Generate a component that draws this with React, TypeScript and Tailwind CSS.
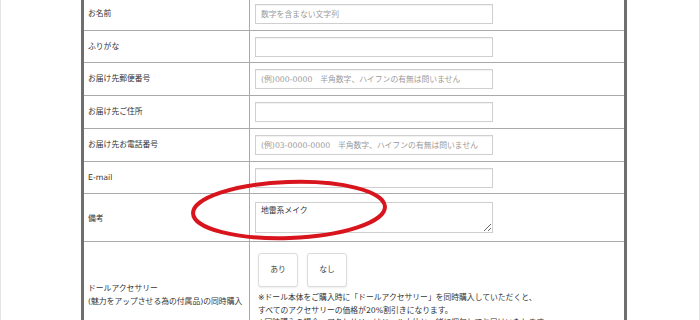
import React from "react";

const ROWS = [
  { label: "お名前", placeholder: "数字を含まない文字列", h: "h-[33px]" },
  { label: "ふりがな", placeholder: "", h: "h-[32px]" },
  { label: "お届け先郵便番号", placeholder: "(例)000-0000　半角数字、ハイフンの有無は問いません", h: "h-[33px]" },
  { label: "お届け先ご住所", placeholder: "", h: "h-[33px]" },
  { label: "お届け先お電話番号", placeholder: "(例)03-0000-0000　半角数字、ハイフンの有無は問いません", h: "h-[33px]" },
  { label: "E-mail", placeholder: "", h: "h-[32px]" },
];

const FONT = { fontFamily: '"DejaVu Sans", "Noto Sans CJK JP", sans-serif' };

export default function App() {
  return (
    <div
      className="relative h-[320px] w-[700px] overflow-hidden border-x border-[#e4e4e4] bg-white text-[7.8px] text-[#333]"
      style={FONT}
    >
      <div className="ml-[80px] mt-[-2px] w-[546px] border-x-[3px] border-[#6e6e6e]">
        {ROWS.map((row) => (
          <div key={row.label} className={`flex border-b border-[#a9a9a9] ${row.h}`}>
            <div className="flex w-[166px] shrink-0 items-center border-r border-[#a9a9a9] pl-[4px]">
              {row.label}
            </div>
            <div className="flex items-center pl-[5px]">
              <input
                readOnly
                placeholder={row.placeholder}
                className="h-[20px] w-[238px] border border-[#cfcfcf] bg-white px-[5px] text-[7.8px] shadow-[inset_0_1px_1px_rgba(0,0,0,0.06)] outline-none placeholder:text-[#9a9a9a]"
              />
            </div>
          </div>
        ))}

        {/* 備考 */}
        <div className="flex h-[48px] border-b border-[#a9a9a9]">
          <div className="flex w-[166px] shrink-0 items-center border-r border-[#a9a9a9] pl-[4px] pt-[2px]">
            備考
          </div>
          <div className="flex items-center pl-[5px]">
            <textarea
              readOnly
              value="地雷系メイク"
              className="h-[31px] w-[238px] border border-[#cfcfcf] bg-white px-[5px] pt-[3px] text-[7.8px] leading-[10px] text-[#333] outline-none"
            />
          </div>
        </div>

        {/* ドールアクセサリー */}
        <div className="flex h-[100px]">
          <div className="w-[166px] shrink-0 border-r border-[#a9a9a9] pl-[4px] pt-[41px] leading-[12.5px]">
            <p>ドールアクセサリー</p>
            <p>(魅力をアップさせる為の付属品)の同時購入</p>
          </div>
          <div className="pl-[8px] pt-[11px]">
            <div className="flex gap-[9px]">
              {["あり", "なし"].map((t) => (
                <button
                  key={t}
                  className="flex h-[34px] w-[40px] items-center justify-center rounded-[3px] border border-[#dcdcdc] bg-white text-[7.8px] text-[#444] shadow-[0_1px_2px_rgba(0,0,0,0.08)]"
                >
                  {t}
                </button>
              ))}
            </div>
            <div className="mt-[5px] leading-[12.5px]">
              <p>※ドール本体をご購入時に「ドールアクセサリー」を同時購入していただくと、</p>
              <p>すべてのアクセサリーの価格が20%割引きになります。</p>
              <p>※同時購入の場合、アクセサリーはドール本体と一緒に梱包してお届けいたします。</p>
            </div>
          </div>
        </div>
      </div>

      {/* red marker circle */}
      <svg className="absolute left-[186px] top-[174px] h-[72px] w-[204px]" viewBox="0 0 204 72">
        <ellipse
          cx="102"
          cy="36"
          rx="96"
          ry="28"
          fill="none"
          stroke="#d8141c"
          strokeWidth="4"
          transform="rotate(-2 102 36)"
        />
      </svg>
    </div>
  );
}
